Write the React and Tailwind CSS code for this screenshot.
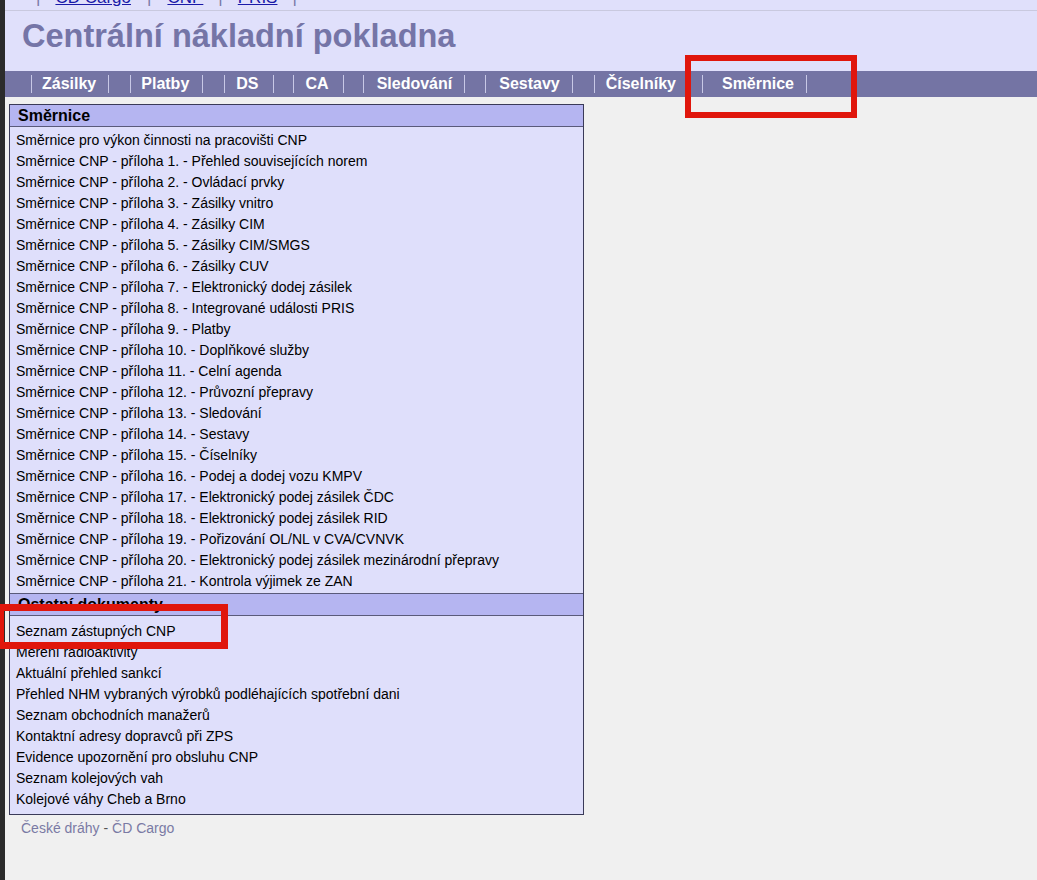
const smernice = [
  'Směrnice pro výkon činnosti na pracovišti CNP',
  'Směrnice CNP - příloha 1. - Přehled souvisejících norem',
  'Směrnice CNP - příloha 2. - Ovládací prvky',
  'Směrnice CNP - příloha 3. - Zásilky vnitro',
  'Směrnice CNP - příloha 4. - Zásilky CIM',
  'Směrnice CNP - příloha 5. - Zásilky CIM/SMGS',
  'Směrnice CNP - příloha 6. - Zásilky CUV',
  'Směrnice CNP - příloha 7. - Elektronický dodej zásilek',
  'Směrnice CNP - příloha 8. - Integrované události PRIS',
  'Směrnice CNP - příloha 9. - Platby',
  'Směrnice CNP - příloha 10. - Doplňkové služby',
  'Směrnice CNP - příloha 11. - Celní agenda',
  'Směrnice CNP - příloha 12. - Průvozní přepravy',
  'Směrnice CNP - příloha 13. - Sledování',
  'Směrnice CNP - příloha 14. - Sestavy',
  'Směrnice CNP - příloha 15. - Číselníky',
  'Směrnice CNP - příloha 16. - Podej a dodej vozu KMPV',
  'Směrnice CNP - příloha 17. - Elektronický podej zásilek ČDC',
  'Směrnice CNP - příloha 18. - Elektronický podej zásilek RID',
  'Směrnice CNP - příloha 19. - Pořizování OL/NL v CVA/CVNVK',
  'Směrnice CNP - příloha 20. - Elektronický podej zásilek mezinárodní přepravy',
  'Směrnice CNP - příloha 21. - Kontrola výjimek ze ZAN',
]

const ostatni = [
  'Seznam zástupných CNP',
  'Měření radioaktivity',
  'Aktuální přehled sankcí',
  'Přehled NHM vybraných výrobků podléhajících spotřební dani',
  'Seznam obchodních manažerů',
  'Kontaktní adresy dopravců při ZPS',
  'Evidence upozornění pro obsluhu CNP',
  'Seznam kolejových vah',
  'Kolejové váhy Cheb a Brno',
]

const menu = [
  { name: 'Zásilky', cls: 'pl-[10px] pr-[12px] mr-[21px] border-r' },
  { name: 'Platby', cls: 'pl-[10px] pr-[13px] mr-[21px] border-r' },
  { name: 'DS', cls: 'pl-[11px] pr-[14px] mr-[19px] border-r' },
  { name: 'CA', cls: 'pl-[12px] pr-[14px] mr-[19px] border-r' },
  { name: 'Sledování', cls: 'pl-[13px] pr-[12px] mr-[20px] border-r' },
  { name: 'Sestavy', cls: 'pl-[13px] pr-[12px] mr-[21px] border-r' },
  { name: 'Číselníky', cls: 'pl-[11px] pr-0 mr-[26px]' },
  { name: 'Směrnice', cls: 'pl-[19px] pr-[12px] border-r' },
]

function Section({ title, items, first }) {
  return (
    <>
      <div className="h-[22px] bg-[#b5b5f1] border-b border-[#5a5a7a] pl-[8px] font-bold text-[16px] leading-[21px] text-black">
        {title}
      </div>
      <div className={first ? 'pt-[3px] pb-[1px] border-b border-[#5a5a7a]' : 'pt-[5px] pb-[4px]'}>
        {items.map(t => (
          <div key={t} className="h-[21px] leading-[21px] pl-[6px] text-[14px] text-black whitespace-nowrap">{t}</div>
        ))}
      </div>
    </>
  )
}

export default function App() {
  return (
    <div className="relative flex min-h-[880px] bg-[#f0f0f0] overflow-hidden" style={{ fontFamily: '"Liberation Sans", Arial, sans-serif' }}>
      <div className="w-[5px] shrink-0 bg-[#2b2b2b]" />
      <div className="flex-1 flex flex-col">
        <div className="bg-[#e0e0fb]">
          {/* top links, cut off by the window */}
          <div className="h-[11px] overflow-hidden border-b border-[#c9c9df]">
            <div className="-mt-[12px] flex items-center text-[17px] leading-[20px] text-[#7a7aa6]">
              <span className="ml-[31px]">|</span>
              <a className="ml-[15px] text-[#1a1aa8] underline">ČD Cargo</a>
              <span className="ml-[16px]">|</span>
              <a className="ml-[16px] text-[#1a1aa8] underline">CNP</a>
              <span className="ml-[15px]">|</span>
              <a className="ml-[15px] text-[#1a1aa8] underline">PRIS</a>
              <span className="ml-[15px]">|</span>
            </div>
          </div>
          <div className="h-[60px] pl-[17px] pt-[6px]">
            <h1 className="text-[32.5px] leading-[38px] font-bold text-[#7575a7]">Centrální nákladní pokladna</h1>
          </div>
          <div className="h-[26px] bg-[#7474a4] flex items-center pl-[26px]">
            {menu.map(m => (
              <div
                key={m.name}
                className={`flex items-center h-[18px] border-l border-[#c8c8e6] text-[16px] font-bold text-white whitespace-nowrap ${m.cls}`}
              >
                {m.name}
              </div>
            ))}
          </div>
        </div>

        <div className="pl-[4px] pt-[7px]">
          <div className="w-[575px] border border-[#3a3a58] bg-[#dfdffb]">
            <Section title="Směrnice" items={smernice} first />
            <Section title="Ostatní dokumenty" items={ostatni} />
          </div>
          <div className="pl-[12px] pt-[4px] text-[14px] leading-[18px] text-[#555]">
            <a className="text-[#7a7aa4]">České dráhy</a> - <a className="text-[#7a7aa4]">ČD Cargo</a>
          </div>
        </div>
      </div>

      {/* red annotation boxes */}
      <div className="absolute left-[685px] top-[55px] w-[172px] h-[63px] border-[6px] border-[#e0160c]" />
      <div className="absolute -left-[3px] top-[604px] w-[231px] h-[45px] border-[7px] border-[#e0160c]" />
    </div>
  )
}
